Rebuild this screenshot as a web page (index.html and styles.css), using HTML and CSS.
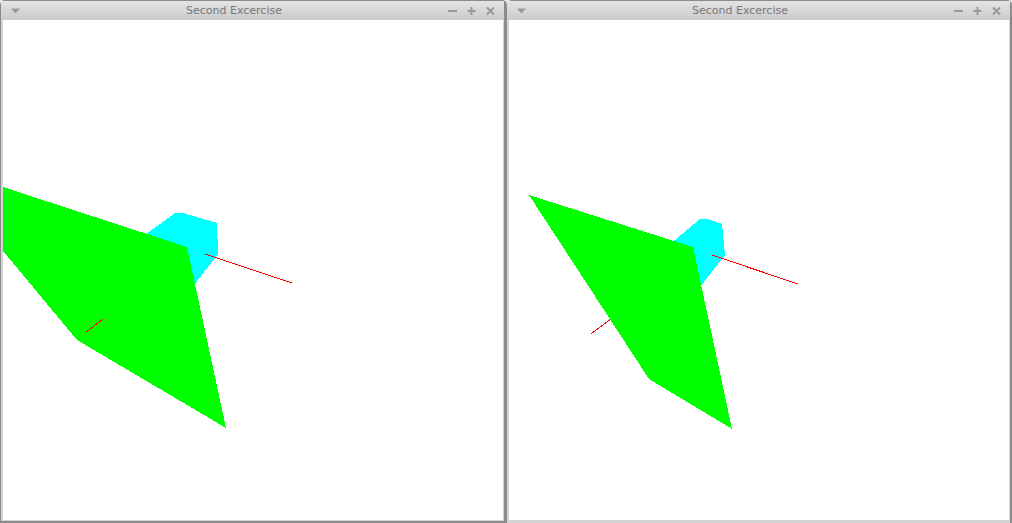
FILE: index.html
```html
<!DOCTYPE html>
<html lang="en">

<head>
    <meta charset="UTF-8">
    <title>Second Excercise</title>
    <link rel="stylesheet" href="styles.css">
</head>

<body>
    <div class="desktop">
        <!-- left window -->
        <div class="window window-left">
            <div class="titlebar">
                <div class="buttons">
                    <svg class="btn" viewBox="0 0 19 12"><path class="arrow" d="M5 3.500h9l-4.500 5z" /></svg>
                </div>
                <div class="title">Second Excercise</div>
                <div class="buttons">
                    <svg class="btn" viewBox="0 0 19 12"><path class="glyph" d="M5 6h9" /></svg>
                    <svg class="btn" viewBox="0 0 19 12"><path class="glyph" d="M5.500 6h8M9.500 2v8" /></svg>
                    <svg class="btn" viewBox="0 0 19 12"><path class="glyph" d="M6 2.500l7 7M13 2.500l-7 7" /></svg>
                </div>
            </div>
            <svg class="canvas" viewBox="3 20 500 500">
                <polygon class="cyan" points="138,240 175,213 183,213 214,222 217,223 218,254 194,285 170,270" />
                <line class="red" x1="205" y1="254" x2="292" y2="283" />
                <polygon class="green" points="3,187 187,247 226,428 77,340 3,251" />
                <line class="red" x1="85" y1="333" x2="103" y2="319" />
            </svg>
        </div>

        <!-- right window -->
        <div class="window window-right">
            <div class="titlebar">
                <div class="buttons">
                    <svg class="btn" viewBox="0 0 19 12"><path class="arrow" d="M5 3.500h9l-4.500 5z" /></svg>
                </div>
                <div class="title">Second Excercise</div>
                <div class="buttons">
                    <svg class="btn" viewBox="0 0 19 12"><path class="glyph" d="M5 6h9" /></svg>
                    <svg class="btn" viewBox="0 0 19 12"><path class="glyph" d="M5.500 6h8M9.500 2v8" /></svg>
                    <svg class="btn" viewBox="0 0 19 12"><path class="glyph" d="M6 2.500l7 7M13 2.500l-7 7" /></svg>
                </div>
            </div>
            <svg class="canvas" viewBox="509 20 500 500">
                <polygon class="cyan" points="663,250 700,219 707,219 720,223 722,224 725,255 700,287 690,270" />
                <line class="red" x1="712" y1="255" x2="798" y2="284" />
                <line class="red" x1="591" y1="334" x2="611" y2="319" />
                <polygon class="green" points="529,195 693,247 732,429 649,379" />
            </svg>
        </div>
    </div>
</body>

</html>
```

FILE: styles.css
```css
body {
    margin: 0;
    background-color: #e6e6e6;
    overflow: hidden;
}

.desktop {
    display: flex;
    width: 1012px;
    height: 523px;
}

.window {
    box-sizing: border-box;
    height: 523px;
    display: flex;
    flex-direction: column;
    background-color: #d4d4d4;
    border-top: 1px solid #8c8c8c;
    border-radius: 5px 5px 0 0;
}

.window-left {
    width: 507px;
    padding: 0 1px 1px 2px;
    border-left: 1px solid #8c8c8c;
    border-right: 3px solid #8c8c8c;
    border-bottom: 2px solid #8c8c8c;
}

.window-right {
    width: 505px;
    padding: 0 1px 3px 2px;
    border-right: 2px solid #8c8c8c;
}

.titlebar {
    height: 19px;
    flex-shrink: 0;
    display: flex;
    align-items: center;
    margin: 0 -1px 0 -2px;
    padding: 0 4px 0 5px;
    background: linear-gradient(#e4e4e4, #cbcbcb);
}

.title {
    flex: 1;
    text-align: center;
    font-family: "DejaVu Sans", sans-serif;
    font-size: 11px;
    color: #777;
}

.buttons {
    display: flex;
}

.btn {
    width: 19px;
    height: 12px;
}

.arrow {
    fill: #999;
}

.glyph {
    fill: none;
    stroke: #999;
    stroke-width: 2;
}

.canvas {
    display: block;
    width: 500px;
    height: 500px;
    flex-shrink: 0;
    background-color: #fff;
    shape-rendering: crispEdges;
}

.green {
    fill: #0f0;
}

.cyan {
    fill: #0ff;
}

.red {
    stroke: #f00;
    stroke-width: 1;
}
```
